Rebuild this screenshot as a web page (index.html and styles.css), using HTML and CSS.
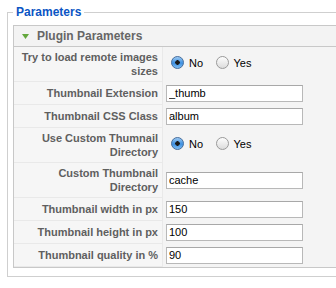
FILE: index.html
```html
<!DOCTYPE html>
<html lang="en">
<head>
  <meta charset="UTF-8" />
  <title>Plugin Parameters</title>
  <link rel="stylesheet" href="styles.css">
</head>
<body>
  <fieldset class="adminform">
    <legend>Parameters</legend>

    <div class="panel">
      <h3 class="title">
        <svg class="toggler" width="7" height="5" viewBox="0 0 7 5"><polygon points="0,0 7,0 3.5,5" fill="#63a83c"/></svg>
        Plugin Parameters
      </h3>
      <table class="paramlist">
        <tr>
          <td class="key">Try to load remote images sizes</td>
          <td class="value">
            <label class="radio"><input type="radio" name="remote" checked> No</label>
            <label class="radio"><input type="radio" name="remote"> Yes</label>
          </td>
        </tr>
        <tr>
          <td class="key">Thumbnail Extension</td>
          <td class="value"><input type="text" class="text" value="_thumb"></td>
        </tr>
        <tr>
          <td class="key">Thumbnail CSS Class</td>
          <td class="value"><input type="text" class="text" value="album"></td>
        </tr>
        <tr>
          <td class="key">Use Custom Thumnail Directory</td>
          <td class="value">
            <label class="radio"><input type="radio" name="customdir" checked> No</label>
            <label class="radio"><input type="radio" name="customdir"> Yes</label>
          </td>
        </tr>
        <tr>
          <td class="key">Custom Thumbnail Directory</td>
          <td class="value"><input type="text" class="text" value="cache"></td>
        </tr>
        <tr>
          <td class="key">Thumbnail width in px</td>
          <td class="value"><input type="text" class="text" value="150"></td>
        </tr>
        <tr>
          <td class="key">Thumbnail height in px</td>
          <td class="value"><input type="text" class="text" value="100"></td>
        </tr>
        <tr>
          <td class="key">Thumbnail quality in %</td>
          <td class="value"><input type="text" class="text" value="90"></td>
        </tr>
      </table>
    </div>
  </fieldset>
</body>
</html>
```

FILE: styles.css
```css
html, body {
  margin: 0;
  overflow: hidden;
}
body {
  font-family: "Liberation Sans", Arial, sans-serif;
  background: #fff;
  width: 336px;
  height: 288px;
}
.adminform {
  margin: 5px 0 0 7px;
  padding: 6px 0 8px 5px;
  border: 1px solid #cfcfcf;
  border-right: none;
  width: 329px;
  box-sizing: border-box;
  min-width: 0;
}
.adminform legend {
  padding: 0 3px;
  font-size: 12px;
  line-height: 14px;
  font-weight: bold;
  color: #0b55c4;
}
.panel {
  border: 1px solid #c8c8c8;
  border-right: none;
  background: #f4f4f4;
}
.panel .title {
  margin: 0;
  padding: 0 0 0 8px;
  height: 20px;
  line-height: 20px;
  font-size: 12px;
  font-weight: bold;
  color: #666;
  background: #f3f3f3;
  border-bottom: 1px solid #c8c8c8;
  display: flex;
  align-items: center;
  gap: 8px;
}
.toggler {
  margin-top: 1px;
}
.paramlist {
  border-collapse: collapse;
  width: 100%;
}
.paramlist td {
  padding: 3px 0 3px 3px;
  vertical-align: middle;
}
.paramlist td.key {
  width: 144px;
  padding: 3px 4px 3px 0;
  background: #f6f6f6;
  border-bottom: 1px solid #e9e9e9;
  border-right: 1px solid #e9e9e9;
  text-align: right;
  font-size: 11px;
  line-height: 14px;
  font-weight: bold;
  color: #5f5f5f;
}
.paramlist td.value {
  background: #f4f4f4;
}
input.text {
  display: block;
  margin: 0;
  width: 137px;
  height: 17px;
  box-sizing: border-box;
  padding: 0 2px;
  border: 1px solid #b8b8b8;
  border-top-color: #a8a8a8;
  background: #fff;
  font-family: "Liberation Sans", Arial, sans-serif;
  font-size: 11px;
  color: #000;
  outline: none;
}
.radio {
  display: inline-flex;
  align-items: center;
  font-size: 11px;
  color: #000;
  margin-right: 8px;
}
.radio input {
  appearance: none;
  -webkit-appearance: none;
  width: 13px;
  height: 13px;
  margin: 0 5px 0 5px;
  border-radius: 50%;
  border: 1px solid #9a9a9a;
  background: linear-gradient(#fdfdfd, #dcdcdc);
  box-sizing: border-box;
}
.radio + .radio input {
  margin-left: 0;
}
.radio input:checked {
  border-color: #4a6f9c;
  background: radial-gradient(circle at 50% 50%, #1a1a1a 0, #1a1a1a 2px, transparent 2.5px),
              linear-gradient(#9ccaf4, #3d8fe0 55%, #7fbef5);
}
```
